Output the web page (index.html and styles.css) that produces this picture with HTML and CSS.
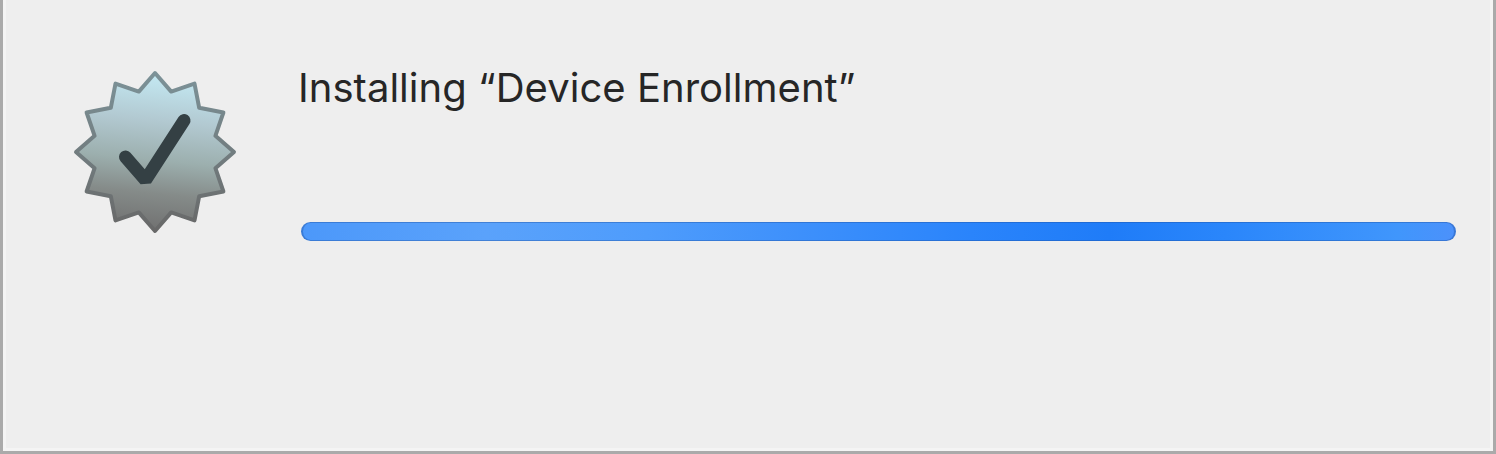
FILE: index.html
```
<!DOCTYPE html>
<html lang="en">
<head>
<meta charset="utf-8">
<title>Installing</title>
<link rel="stylesheet" href="styles.css">
</head>
<body>
<main class="dialog">
  <svg class="badge" viewBox="0 0 164 164" aria-hidden="true">
    <defs>
      <linearGradient id="metal" x1="0.55" y1="0" x2="0.45" y2="1">
        <stop offset="0" stop-color="#c4eaf4"/>
        <stop offset="0.3" stop-color="#b2c9d1"/>
        <stop offset="0.55" stop-color="#9cafae"/>
        <stop offset="0.76" stop-color="#858b89"/>
        <stop offset="1" stop-color="#707070"/>
      </linearGradient>
      <linearGradient id="rim" x1="0" y1="0" x2="0" y2="1">
        <stop offset="0" stop-color="#7c9298"/>
        <stop offset="1" stop-color="#686868"/>
      </linearGradient>
    </defs>
    <path class="seal" d="M82 3 98.2 21.6 121.5 13.6 126.2 37.8 150.4 42.5 142.4 65.8 161 82 142.4 98.2 150.4 121.5 126.2 126.2 121.5 150.4 98.2 142.4 82 161 65.8 142.4 42.5 150.4 37.8 126.2 13.6 121.5 21.6 98.2 3 82 21.6 65.8 13.6 42.5 37.8 37.8 42.5 13.6 65.8 21.6Z"/>
    <path class="check" d="M52.5 87 72.5 110 111 50.5"/>
  </svg>
  <section class="content">
    <h1 class="title">Installing “Device Enrollment”</h1>
    <div class="progress" role="progressbar" aria-label="Installing"></div>
  </section>
</main>
</body>
</html>
```
FILE: styles.css
```
* {
  box-sizing: border-box;
}

body {
  margin: 0;
  background: #eee;
}

.dialog {
  display: flex;
  width: 100%;
  height: 454px;
  padding: 64px 37px 0 70px;
  background: #eee;
  border: solid #aaa;
  border-width: 0 3px 3px;
  box-shadow: inset 3px 0 #f4f4f4, inset -3px 0 #f4f4f4, inset 0 -3px #f4f4f4;
}

.badge {
  flex: none;
  width: 164px;
  height: 164px;
  margin-top: 6px;
}

.seal {
  fill: url(#metal);
  stroke: url(#rim);
  stroke-width: 4;
  stroke-linejoin: round;
}

.check {
  fill: none;
  stroke: #344044;
  stroke-width: 13;
  stroke-linecap: round;
  stroke-linejoin: bevel;
}

.content {
  flex: 1;
  margin-left: 64px;
}

.title {
  margin: 0 0 0 -3px;
  font: 400 40px/48px Inter, sans-serif;
  letter-spacing: 0.03px;
  color: #262626;
  white-space: nowrap;
}

.progress {
  height: 19px;
  margin-top: 110px;
  border: solid rgba(30, 80, 160, 0.4);
  border-width: 1px 2px;
  border-radius: 10px;
  background: linear-gradient(90deg, #4c98fa 0, #5aa2fb 16%, #4e9cfc 30%, #3f91fb 42%, #2a84fb 58%, #1f7cf8 70%, #2a86fb 80%, #4096fc 95%, #4c91fb 100%) border-box;
}
```
